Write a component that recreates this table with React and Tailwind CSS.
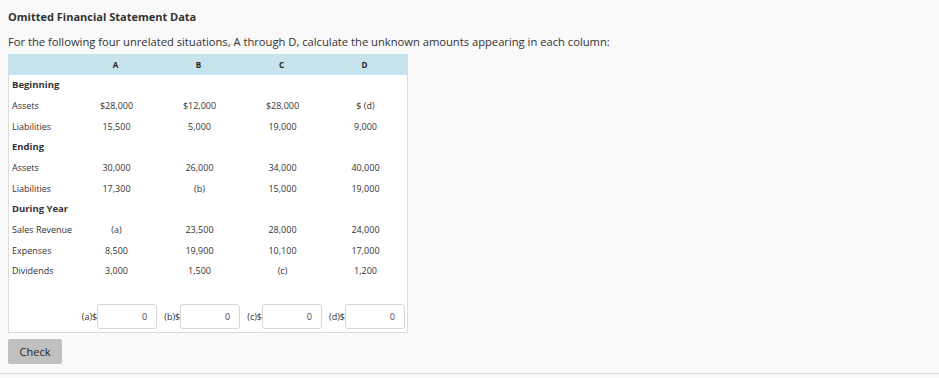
import React, { useState } from "react";

const columns = ["A", "B", "C", "D"];

const rows = [
  { heading: "Beginning" },
  { label: "Assets", values: ["$28,000", "$12,000", "$28,000", "$ (d)"] },
  { label: "Liabilities", values: ["15,500", "5,000", "19,000", "9,000"] },
  { heading: "Ending" },
  { label: "Assets", values: ["30,000", "26,000", "34,000", "40,000"] },
  { label: "Liabilities", values: ["17,300", "(b)", "15,000", "19,000"] },
  { heading: "During Year" },
  { label: "Sales Revenue", values: ["(a)", "23,500", "28,000", "24,000"] },
  { label: "Expenses", values: ["8,500", "19,900", "10,100", "17,000"] },
  { label: "Dividends", values: ["3,000", "1,500", "(c)", "1,200"] },
];

export default function App() {
  const [answers, setAnswers] = useState({ a: "0", b: "0", c: "0", d: "0" });

  return (
    <div
      className="w-[939px] h-[378px] bg-[#f9f9f9] text-[#333] overflow-hidden"
      style={{ fontFamily: "'Open Sans', sans-serif" }}
    >
      <div className="px-2 pt-[10px]">
        <h1 className="text-[11px] font-bold leading-[14px] text-[#333]">Omitted Financial Statement Data</h1>
        <p className="mt-[11px] text-[11.2px] leading-[14px] text-[#333]">
          For the following four unrelated situations, A through D, calculate the unknown amounts appearing in each column:
        </p>

        {/* Data table */}
        <div className="mt-[5px] w-[400px] border border-t-0 border-[#dcdcdc] bg-white">
          <div className="grid grid-cols-[66px_repeat(4,83px)] h-[21px] items-center bg-[#c6e3ee] -mx-px">
            <div />
            {columns.map((c) => (
              <div key={c} className="text-center text-[8px] font-bold text-[#222]">{c}</div>
            ))}
          </div>

          {rows.map((row, i) =>
            row.heading ? (
              <div key={i} className="h-[20.65px] flex items-center pl-[3px] text-[9.5px] font-bold text-[#333]">
                {row.heading}
              </div>
            ) : (
              <div key={i} className="grid grid-cols-[66px_repeat(4,83px)] h-[20.65px] items-center text-[9px] text-[#333]">
                <div className="pl-[3px]">{row.label}</div>
                {row.values.map((v, j) => (
                  <div key={j} className="text-center">{v}</div>
                ))}
              </div>
            )
          )}

          {/* Answer inputs */}
          <div className="flex justify-end gap-[7px] pr-[2px] pt-[23px] pb-[3px]">
            {["a", "b", "c", "d"].map((k) => (
              <div key={k} className="flex items-center">
                <span className="text-[9px] text-[#333]">({k})$</span>
                <input
                  value={answers[k]}
                  onChange={(e) => setAnswers({ ...answers, [k]: e.target.value })}
                  className="w-[60px] h-[25px] border border-[#d6d6d6] rounded-[3px] bg-white text-right pr-[9px] text-[9px] text-[#445] outline-none"
                />
              </div>
            ))}
          </div>
        </div>

        <button className="mt-[6px] w-[54px] h-[25px] rounded-[2px] bg-[#c0c0c0] text-[11px] text-[#222]">
          Check
        </button>
      </div>
      <div className="mt-[9px] border-t border-[#dedede]" />
    </div>
  );
}
